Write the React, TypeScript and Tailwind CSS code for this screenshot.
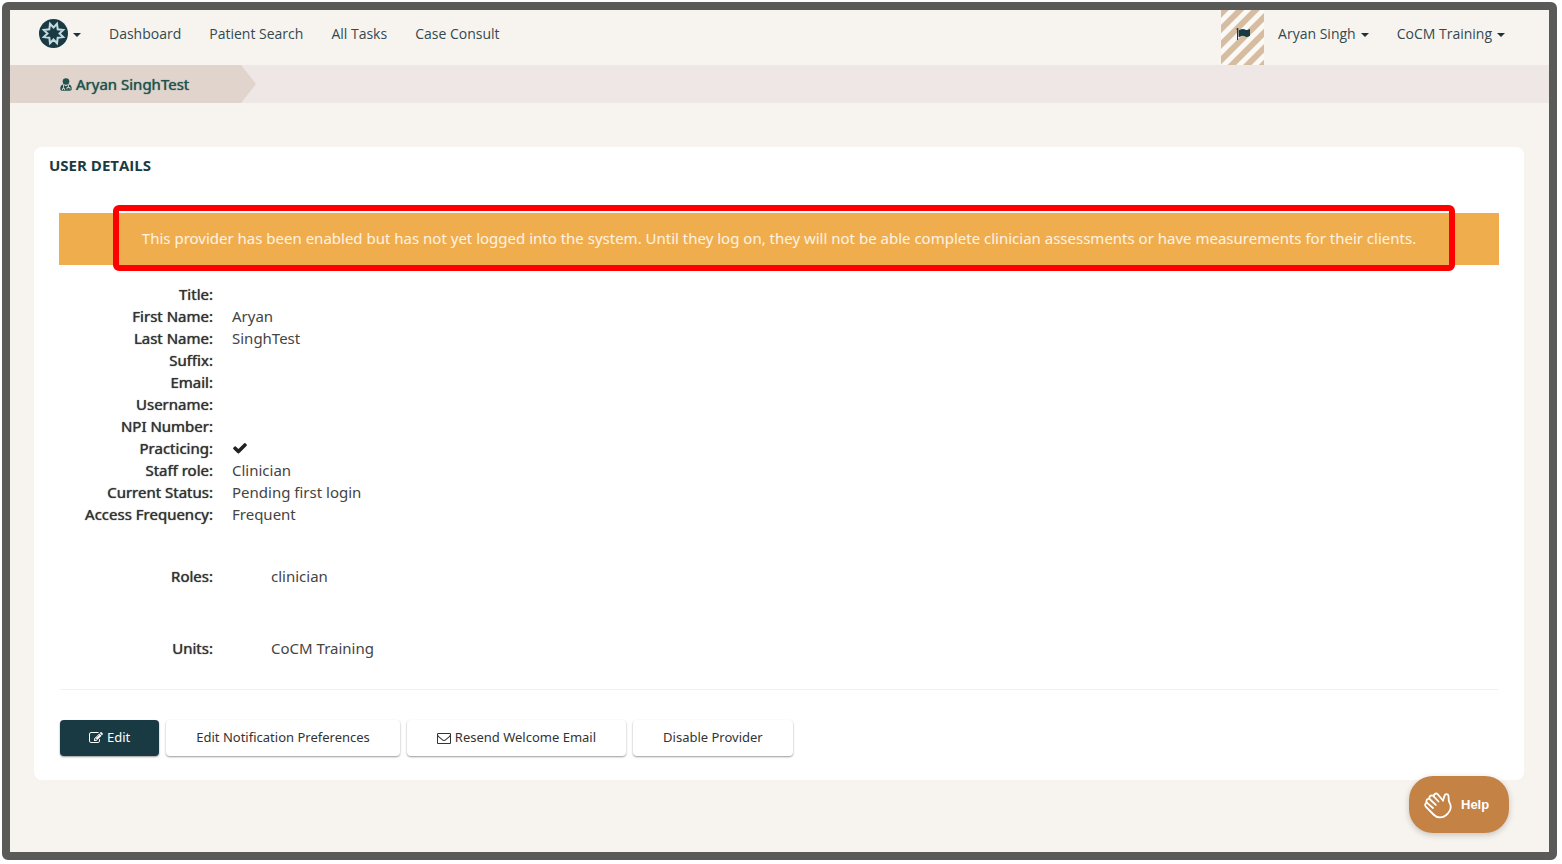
import type { ReactNode } from "react";

const details: { label: string; value: ReactNode }[] = [
  { label: "Title:", value: "" },
  { label: "First Name:", value: "Aryan" },
  { label: "Last Name:", value: "SinghTest" },
  { label: "Suffix:", value: "" },
  { label: "Email:", value: "" },
  { label: "Username:", value: "" },
  { label: "NPI Number:", value: "" },
  { label: "Practicing:", value: <CheckIcon /> },
  { label: "Staff role:", value: "Clinician" },
  { label: "Current Status:", value: "Pending first login" },
  { label: "Access Frequency:", value: "Frequent" },
];

const navLinks = ["Dashboard", "Patient Search", "All Tasks", "Case Consult"];

export default function App() {
  return (
    <div className="flex min-h-screen bg-white pt-0.5 pr-[5px] pb-1 pl-0.5 font-['Open_Sans',sans-serif]">
      <div className="relative flex flex-1 flex-col rounded-md border-8 border-[#5a5a58] bg-[#f7f4f0]">
        <Topbar />
        <Breadcrumb />

        <main className="mt-11 mr-[25px] mb-18 ml-6 rounded-lg bg-white pt-1.5 pb-6">
          <h1 className="pl-[15px] text-[15px] leading-6 font-bold text-[#1b3b43]">USER DETAILS</h1>

          <div className="mx-[25px] mt-9 flow-root bg-[#f0ad4e]">
            <p className="-mt-2 mr-11 -mb-1.5 ml-[54px] rounded-md border-6 border-[#ff0000] pr-3.5 pl-1 text-center font-['Noto_Sans',sans-serif] text-[15px] leading-[54px] text-white/85">
              This provider has been enabled but has not yet logged into the system. Until they log on, they will not be able complete clinician assessments or have measurements for their clients.
            </p>
          </div>

          <dl className="mt-[18px] font-['Noto_Sans',sans-serif] text-[15px] leading-[22px] text-[#444]">
            {details.map((row) => (
              <DetailRow key={row.label} label={row.label}>
                <dd className="flex items-center pl-[19px]">{row.value}</dd>
              </DetailRow>
            ))}
            <div className="mt-10">
              <DetailRow label="Roles:">
                <dd className="pl-[58px]">clinician</dd>
              </DetailRow>
            </div>
            <div className="mt-[50px]">
              <DetailRow label="Units:">
                <dd className="pl-[58px]">CoCM Training</dd>
              </DetailRow>
            </div>
          </dl>

          <hr className="mx-[26px] mt-[30px] border-[#f1f1f1]" />

          <div className="mt-[30px] ml-[26px] flex gap-[7px] font-['Noto_Sans',sans-serif] text-[13px]">
            <button className="flex h-9 items-center gap-1 rounded bg-[#1a3a43] px-[29px] text-white shadow-[0_1px_2px_rgba(0,0,0,0.4)]">
              <EditIcon />
              Edit
            </button>
            <ActionButton>Edit Notification Preferences</ActionButton>
            <ActionButton>
              <MailIcon />
              Resend Welcome Email
            </ActionButton>
            <ActionButton>Disable Provider</ActionButton>
          </div>
        </main>

        <button className="absolute right-10 bottom-[19px] flex h-[57px] w-[100px] items-center gap-[9px] rounded-3xl bg-[#c48345] pl-[15px] font-['Liberation_Sans',sans-serif] text-[13px] font-bold text-white shadow-[0_2px_6px_rgba(0,0,0,0.2)]">
          <WaveIcon />
          Help
        </button>
      </div>
    </div>
  );
}

function Topbar() {
  return (
    <header className="flex h-[55px] items-center justify-between pr-11 pl-[29px] text-sm text-[#33494d]">
      <nav className="flex items-center gap-7 pb-2">
        <button className="flex items-center gap-[5px]" aria-label="Main menu">
          <Logo />
          <Caret />
        </button>
        {navLinks.map((link) => (
          <a key={link} href="#">
            {link}
          </a>
        ))}
      </nav>
      <div className="flex items-center">
        <a
          href="#"
          aria-label="Flags"
          className="mr-3.5 flex h-[55px] w-[43px] items-center justify-center bg-[repeating-linear-gradient(135deg,#d6bda1_0px,#d6bda1_5px,#fbf9f6_6px,#fbf9f6_10px,#d6bda1_11px)] pb-2"
        >
          <FlagIcon />
        </a>
        <button className="mr-7 flex items-center gap-[5px] pb-2">
          Aryan Singh
          <Caret />
        </button>
        <button className="flex items-center gap-[5px] pb-2">
          CoCM Training
          <Caret />
        </button>
      </div>
    </header>
  );
}

function Breadcrumb() {
  return (
    <div className="flex h-[38px] bg-[#efe7e5]">
      <a
        href="#"
        className="flex w-[246px] items-center gap-1 bg-[#e0d4cc] pl-[50px] font-['Noto_Sans',sans-serif] text-[15px] text-[#23524f] [text-shadow:0_0_1px_#23524f] [clip-path:polygon(0_0,231px_0,100%_50%,231px_100%,0_100%)]"
      >
        <UserMdIcon />
        Aryan SinghTest
      </a>
    </div>
  );
}

function DetailRow({ label, children }: { label: string; children: ReactNode }) {
  return (
    <div className="flex">
      <dt className="w-[179px] text-right text-[#333] [text-shadow:0_0_1px_#333]">{label}</dt>
      {children}
    </div>
  );
}

function ActionButton({ children }: { children: ReactNode }) {
  return (
    <button className="flex h-9 items-center gap-1 rounded bg-white px-[30px] text-[#333] shadow-[0_1px_2px_rgba(0,0,0,0.4)]">
      {children}
    </button>
  );
}

function Caret() {
  return <span className="mt-0.5 border-x-4 border-t-4 border-x-transparent border-t-[#1c3238]" />;
}

function Logo() {
  return (
    <svg className="h-[29px] w-[29px]" viewBox="0 0 29 29">
      <circle cx="14.5" cy="14.5" r="14.5" fill="#1a3a43" />
      <path
        d="M14.5 8.500 18 4.800 18.700 10.300 24.200 11 20.500 14.500 24.200 18 18.700 18.700 18 24.200 14.500 20.500 11 24.200 10.300 18.700 4.800 18 8.500 14.500 4.800 11 10.300 10.300 11 4.800Z"
        fill="none"
        stroke="#c3dade"
        strokeWidth="2"
      />
    </svg>
  );
}

function FlagIcon() {
  return (
    <svg className="h-3.5 w-3.5" viewBox="0 0 1792 1792" fill="#1a3a43">
      <path d="M320 256q0 72-64 110v1266q0 13-9.5 22.5t-22.5 9.5h-64q-13 0-22.5-9.5t-9.5-22.5v-1266q-64-38-64-110 0-53 37.5-90.5t90.5-37.5 90.5 37.5 37.5 90.5zm1472 64v763q0 25-12.5 38.5t-39.5 27.5q-215 116-369 116-61 0-123.5-22t-108.5-48-115.5-48-142.5-22q-192 0-464 146-17 9-33 9-26 0-45-19t-19-45v-742q0-32 31-55 21-14 79-43 236-120 421-120 107 0 200 29t219 88q38 19 88 19 54 0 117.5-21t110-47 88-47 54.5-21q26 0 45 19t19 45z" />
    </svg>
  );
}

function UserMdIcon() {
  return (
    <svg className="h-[13px] w-3" viewBox="0 0 12 13">
      <circle cx="6" cy="3.5" r="3.3" fill="#23524f" />
      <path d="M3 6.5C1 7 .3 8.500.3 11c0 1.200.7 1.700 1.700 1.700h8c1 0 1.700-.5 1.700-1.700 0-2.500-.7-4-2.700-4.500L6 8.300Z" fill="#23524f" />
      <path d="M3.500 7v3M2.500 12V10.500h2V12M8.500 7v2M7 11.500V9.500h3v2" fill="none" stroke="#e0d4cc" strokeWidth=".9" />
    </svg>
  );
}

function CheckIcon() {
  return (
    <svg className="h-4 w-4" viewBox="0 0 1792 1792" fill="#222" role="img" aria-label="Yes">
      <path d="M1671 566q0 40-28 68l-724 724-136 136q-28 28-68 28t-68-28l-136-136-362-362q-28-28-28-68t28-68l136-136q28-28 68-28t68 28l294 295 656-657q28-28 68-28t68 28l136 136q28 28 28 68z" />
    </svg>
  );
}

function EditIcon() {
  return (
    <svg className="h-3.5 w-3.5" viewBox="0 0 1792 1792" fill="currentColor">
      <path d="M888 1184l116-116-152-152-116 116v56h96v96h56zm440-720q-16-16-33 1l-350 350q-17 17-1 33t33-1l350-350q17-17 1-33zm80 594v190q0 119-84.5 203.5t-203.5 84.5h-832q-119 0-203.5-84.5t-84.5-203.5v-832q0-119 84.5-203.5t203.5-84.5h832q63 0 117 25 15 7 18 23 3 17-9 29l-49 49q-14 14-32 8-23-6-45-6h-832q-66 0-113 47t-47 113v832q0 66 47 113t113 47h832q66 0 113-47t47-113v-126q0-13 9-22l64-64q15-15 35-7t20 29zm-96-738l288 288-672 672h-288v-288zm444 132l-92 92-288-288 92-92q28-28 68-28t68 28l152 152q28 28 28 68t-28 68z" />
    </svg>
  );
}

function MailIcon() {
  return (
    <svg className="h-3.5 w-3.5" viewBox="0 0 1792 1792" fill="currentColor">
      <path d="M1664 1504v-768q-32 36-69 66-268 206-426 338-51 43-83 67t-86.5 48.5-102.5 24.5h-2q-48 0-102.5-24.5t-86.5-48.5-83-67q-158-132-426-338-37-30-69-66v768q0 13 9.5 22.5t22.5 9.5h1472q13 0 22.5-9.5t9.5-22.5zm0-1051v-24.5l-.5-13-3-12.5-5.5-9-9-7.5-14-2.5h-1472q-13 0-22.5 9.5t-9.5 22.5q0 168 147 284 193 152 401 317 6 5 35 29.5t46 37.5 44.5 31.5 50.5 27.5 43 9h2q20 0 43-9t50.5-27.5 44.5-31.5 46-37.5 35-29.5q208-165 401-317 54-43 100.5-115.5t46.5-131.5zm128-37v1088q0 66-47 113t-113 47h-1472q-66 0-113-47t-47-113v-1088q0-66 47-113t113-47h1472q66 0 113 47t47 113z" />
    </svg>
  );
}

function WaveIcon() {
  return (
    <svg
      className="h-7 w-7"
      viewBox="0 0 28 28"
      fill="none"
      stroke="white"
      strokeWidth="1.8"
      strokeLinecap="round"
      strokeLinejoin="round"
    >
      <path d="M19 9.500 13.500 3A2.400 2.400 0 0 0 9.800 5.500L14.500 10.500" />
      <path d="M10 5.500 9.200 4.800A2.500 2.500 0 0 0 5.600 8L11.800 13.800" />
      <path d="M5.600 8A2.400 2.400 0 0 0 2.800 11.600L9 17" />
      <path d="M2.800 11.600A2.500 2.500 0 0 0 2 15.800L9.500 23.500C13 27.200 18.500 27.200 22 24.200 25.800 21 27.500 17 26.300 13.500L24.800 9.800 24.500 5A2 2 0 0 0 20.600 4.600L19 9.500" />
    </svg>
  );
}
